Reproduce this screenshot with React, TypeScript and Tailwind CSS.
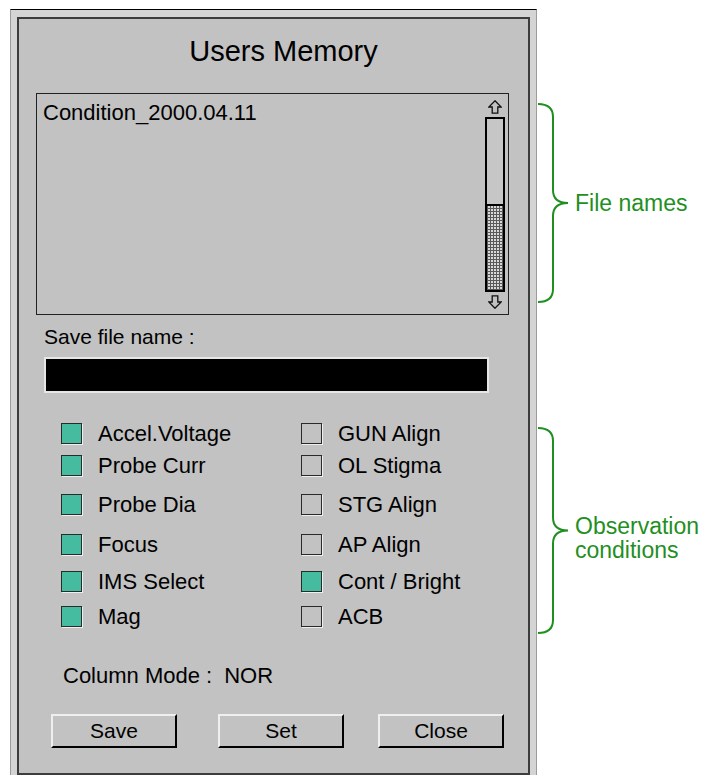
import React from "react";

type Row = { left: string; leftOn: boolean; right: string; rightOn: boolean; h: string };

const rows: Row[] = [
    { left: "Accel.Voltage", leftOn: true, right: "GUN Align", rightOn: false, h: "h-[32px]" },
    { left: "Probe Curr", leftOn: true, right: "OL Stigma", rightOn: false, h: "h-[39px]" },
    { left: "Probe Dia", leftOn: true, right: "STG Align", rightOn: false, h: "h-[40px]" },
    { left: "Focus", leftOn: true, right: "AP Align", rightOn: false, h: "h-[37px]" },
    { left: "IMS Select", leftOn: true, right: "Cont / Bright", rightOn: true, h: "h-[35px]" },
    { left: "Mag", leftOn: true, right: "ACB", rightOn: false, h: "h-[22px]" },
];

function CheckBox({ on }: { on: boolean }) {
    return (
        <div
            className={
                "w-[21px] h-[21px] shrink-0 border border-[#2a2a2a] shadow-[1px_1px_0_#efefef] " +
                (on ? "bg-[#45bc9f]" : "bg-[#c2c2c2]")
            }
        />
    );
}

function Option({ label, on }: { label: string; on: boolean }) {
    return (
        <div className="flex items-start">
            <CheckBox on={on} />
            <span className="ml-[16px] text-[22px] leading-[22px]">{label}</span>
        </div>
    );
}

function Arrow({ down }: { down?: boolean }) {
    return (
        <svg width="14" height="14" viewBox="0 0 14 14" className={down ? "rotate-180" : ""}>
            <polygon
                points="7,0.8 13.2,7 9.8,7 9.8,13.2 4.2,13.2 4.2,7 0.8,7"
                fill="none"
                stroke="#111"
                strokeWidth="1.3"
                strokeLinejoin="miter"
            />
        </svg>
    );
}

function Brace({ h }: { h: number }) {
    const m = h / 2;
    const d = `M1,1 C10,1 16,4 16,14 L16,${m - 13} C16,${m - 4} 22,${m} 31,${m} C22,${m} 16,${m + 4} 16,${m + 13} L16,${h - 14} C16,${h - 4} 10,${h - 1} 1,${h - 1}`;
    return (
        <svg width="32" height={h} viewBox={`0 0 32 ${h}`} className="shrink-0">
            <path d={d} fill="none" stroke="#1f8f1f" strokeWidth="2" />
        </svg>
    );
}

function PanelButton({ label, className }: { label: string; className: string }) {
    return (
        <div
            className={
                "w-[126px] h-[34px] flex items-center justify-center text-[21px] border-2 border-t-[#efefef] border-l-[#efefef] border-b-black border-r-black " +
                className
            }
        >
            {label}
        </div>
    );
}

export default function App() {
    return (
        <div className="h-[776px] overflow-hidden bg-white flex items-start text-black font-['Liberation_Sans',Arial,sans-serif]">
            {/* Window frame */}
            <div className="ml-[10px] mt-[9px] w-[527px] shrink-0 border-t border-t-black border-x border-x-[#9c9c9c] bg-[#d4d4d4] pt-[7px] px-[6px]">
                <div className="border-2 border-[#3c3c3c] bg-[#c2c2c2] pb-[25px]">
                    <div className="mt-[15px] h-[34px] leading-[34px] text-[29px] text-center pl-[20px]">Users Memory</div>

                    {/* File list */}
                    <div className="mt-[25px] ml-[17px] w-[473px] h-[222px] border border-[#222] flex">
                        <div className="flex-1 pl-[6px] pt-[6px] text-[22px] leading-[26px]">Condition_2000.04.11</div>
                        <div className="w-[20px] mr-[3px] pt-[6px] flex flex-col items-center">
                            <Arrow />
                            <div className="mt-[3px] w-[20px] h-[175px] border-2 border-black flex flex-col">
                                <div className="h-[85px] bg-[#c6c6c6]" />
                                <div className="h-[2px] bg-black" />
                                <div className="flex-1 bg-[#d8d8d8] bg-[image:repeating-linear-gradient(0deg,#5a5a5a_0px,#5a5a5a_1px,transparent_1px,transparent_3px),repeating-linear-gradient(90deg,#5a5a5a_0px,#5a5a5a_1px,#d8d8d8_1px,#d8d8d8_3px)]" />
                            </div>
                            <div className="mt-[3px]">
                                <Arrow down />
                            </div>
                        </div>
                    </div>

                    <div className="mt-[10px] ml-[25px] text-[21px] leading-[24px]">Save file name :</div>
                    <div className="mt-[8px] ml-[25px] w-[445px] h-[36px] border-2 border-[#e6e6e6] bg-black" />

                    {/* Observation conditions */}
                    <div className="mt-[30px]">
                        {rows.map((r) => (
                            <div key={r.left} className={"flex items-start " + r.h}>
                                <div className="ml-[42px] w-[240px]">
                                    <Option label={r.left} on={r.leftOn} />
                                </div>
                                <Option label={r.right} on={r.rightOn} />
                            </div>
                        ))}
                    </div>

                    <div className="mt-[35px] ml-[44px] flex text-[22px] leading-[26px]">
                        <span>Column Mode :</span>
                        <span className="ml-[12px]">NOR</span>
                    </div>

                    <div className="mt-[25px] flex">
                        <PanelButton label="Save" className="ml-[32px]" />
                        <PanelButton label="Set" className="ml-[41px]" />
                        <PanelButton label="Close" className="ml-[34px]" />
                    </div>
                </div>
            </div>

            {/* Annotations */}
            <div className="flex flex-col text-[#1f8f1f] text-[23px] leading-[24px]">
                <div className="mt-[103px] flex items-start">
                    <Brace h={200} />
                    <div className="mt-[88px] ml-[6px] whitespace-nowrap">File names</div>
                </div>
                <div className="mt-[124px] flex items-start">
                    <Brace h={207} />
                    <div className="mt-[87px] ml-[6px] whitespace-nowrap">
                        Observation
                        <br />
                        conditions
                    </div>
                </div>
            </div>
        </div>
    );
}
